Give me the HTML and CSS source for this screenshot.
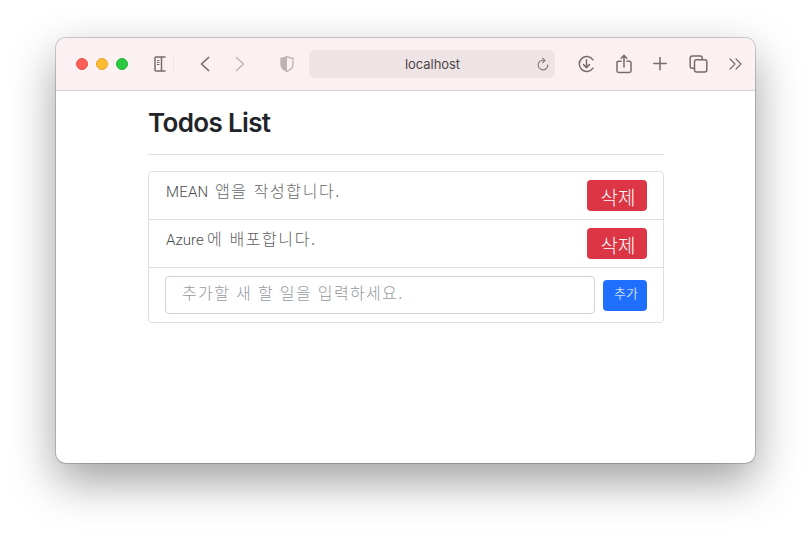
FILE: index.html
```html
<!DOCTYPE html>
<html lang="ko">
<head>
<meta charset="utf-8">
<title>Todos List</title>
<link rel="stylesheet" href="styles.css">
</head>
<body>
<div class="window">
  <header class="toolbar">
    <div class="lights"><span class="light red"></span><span class="light yellow"></span><span class="light green"></span></div>
    <svg class="icon sidebar" width="12" height="16" viewBox="0 0 12 16"><path d="M11.500 1H2Q1 1 1 2V14Q1 15 2 15H11.500M7.500 1V15"/><path class="fine" d="M3 4.500H5.500M3 6.500H5.500M3 8.500H5.500"/></svg>
    <span class="divider"></span>
    <svg class="icon back" width="10" height="16" viewBox="0 0 10 16"><path d="M8.500 1.500L1.500 8L8.500 14.500"/></svg>
    <svg class="icon forward" width="10" height="16" viewBox="0 0 10 16"><path d="M1.500 1.500L8.500 8L1.500 14.500"/></svg>
    <svg class="shield" width="14" height="18" viewBox="0 0 14 18"><path class="line" d="M7 1.600Q9.500 3 13 3.300V9.500C13 13 10 15 7 16.300C4 15 1 13 1 9.500V3.300Q4.500 3 7 1.600Z"/><path class="half" d="M7 1.600Q4.500 3 1 3.300V9.500C1 13 4 15 7 16.300Z"/></svg>
    <div class="address"><span class="host">localhost</span>
      <svg class="reload" width="12" height="15" viewBox="0 0 12 15"><path d="M10.700 7.500A4.800 4.800 0 1 1 6 3.300H7.700M5.300 .8L8 3.400L5.300 6"/></svg>
    </div>
    <svg class="icon download" width="17" height="18" viewBox="0 0 17 18"><path d="M15 4.800A7.500 7.500 0 1 0 15 13.200M8.500 4.800V12.500M5.500 9.600L8.500 12.600L11.500 9.600"/></svg>
    <svg class="icon share" width="16" height="20" viewBox="0 0 16 20"><path d="M5 7.200H2.700Q1 7.200 1 8.900V16.700Q1 18.400 2.700 18.400H13.300Q15 18.400 15 16.700V8.900Q15 7.200 13.300 7.200H11M8 13V1.500M5.200 4.200L8 1.400L10.800 4.200"/></svg>
    <svg class="icon plus" width="14" height="14" viewBox="0 0 14 14"><path d="M.8 6.500H13.200M7 .3V12.700"/></svg>
    <svg class="icon tabs" width="19" height="18" viewBox="0 0 19 18"><rect x="5.500" y="4.700" width="12.300" height="12.300" rx="2"/><path d="M5.500 13.200H3.200Q1.200 13.200 1.200 11.200V3Q1.200 1 3.200 1H11.200Q13.200 1 13.200 3V4.700"/></svg>
    <svg class="icon more" width="13" height="12" viewBox="0 0 13 12"><path d="M1 1L6 6L1 11M7 1L12 6L7 11"/></svg>
  </header>
  <main class="page">
    <h1>Todos List</h1>
    <ul class="list">
      <li class="item"><span class="label"><span class="latin mean">MEAN</span><span class="ko first">앱을 작성합니다.</span></span><button class="btn delete">삭제</button></li>
      <li class="item"><span class="label"><span class="latin azure">Azure</span><span class="ko second">에 배포합니다.</span></span><button class="btn delete">삭제</button></li>
      <li class="item entry"><div class="field"><span class="ko hint">추가할 새 할 일을 입력하세요.</span></div><button class="btn add">추가</button></li>
    </ul>
  </main>
</div>
</body>
</html>
```

FILE: styles.css
```css
* { box-sizing: border-box; }
body { margin: 0; height: 537px; padding: 38px 56px; background: #fff; overflow: hidden; font-family: Inter, "Noto Sans CJK KR", sans-serif; }
.window { width: 699px; height: 425px; background: #fff; border-radius: 10px; overflow: hidden; box-shadow: 0 0 0 1px rgba(0,0,0,.18), 0 18px 46px rgba(0,0,0,.38); }
.toolbar { height: 53px; display: flex; align-items: center; background: #fcf1f2; border-bottom: 1px solid #d8d2d4; padding-left: 20px; }
.toolbar > * { flex: none; }
.lights { display: flex; gap: 8px; width: 78px; }
.light { width: 12px; height: 12px; border-radius: 50%; border: 1px solid; }
.red { background: #fe5f57; border-color: #e8524a; }
.yellow { background: #febc2e; border-color: #e5a52e; }
.green { background: #28c840; border-color: #24b839; }
.icon { fill: none; stroke: #766b6d; stroke-width: 1.5; stroke-linecap: round; stroke-linejoin: round; }
.sidebar { stroke-linecap: butt; }
.fine { stroke-width: 1; }
.divider { width: 1px; height: 12px; background: #eee3e4; margin-left: 7px; }
.back { margin-left: 26px; stroke-width: 1.7; }
.forward { margin-left: 25px; stroke: #bfb5b7; stroke-width: 1.6; }
.shield { margin-left: 35px; fill: none; }
.line { stroke: #bdb2b4; stroke-width: 1.3; }
.half { fill: #bdb2b4; }
.address { margin-left: 15px; width: 246px; height: 28px; border-radius: 6px; background: #eee4e5; display: grid; grid-template-columns: 1fr 18px; align-items: center; padding-left: 18px; }
.host { font-size: 13px; color: #4c4648; text-align: center; padding-left: 1px; letter-spacing: -.05px; }
.reload { fill: none; stroke: #85797c; stroke-width: 1.1; }
.download { margin-left: 22.5px; }
.share { margin-left: 21px; }
.plus { margin-left: 21.5px; }
.tabs { margin-left: 22px; }
.more { margin-left: 21px; stroke-width: 1.2; }
.page { width: 516px; margin-left: 92px; }
h1 { margin: 0 0 16px; height: 64px; border-bottom: 1px solid #dedfe0; padding: 16px 0 0; font-size: 26px; line-height: 32px; font-weight: 600; color: #212529; letter-spacing: -.65px; }
.list { list-style: none; margin: 0; padding: 0; border: 1px solid #dedfe0; border-radius: 4px; }
.item { height: 48px; display: flex; justify-content: space-between; padding: 8px 16px 0 17px; border-bottom: 1px solid #dedfe0; }
.entry { height: 54px; padding-left: 16px; border: 0; }
.label { display: flex; align-items: baseline; height: 20px; line-height: 20px; white-space: nowrap; color: #4a4a4c; }
.latin { font: 300 15px/20px Roboto, sans-serif; }
.mean { width: 49px; letter-spacing: .2px; }
.azure { width: 41px; }
.ko { font-family: "Noto Sans CJK KR", sans-serif; font-weight: 300; font-size: 16px; letter-spacing: 1.6px; white-space: nowrap; }
.first { color: #68686a; }
.second { color: #606062; }
.hint { letter-spacing: 1.35px; color: #95999f; }
.btn { border: 0; border-radius: 4px; height: 31px; color: #fff; font-family: "Noto Sans CJK KR", sans-serif; font-weight: 300; padding: 0; }
.delete { width: 60px; background: #dc3545; font-size: 19px; line-height: 29px; padding: 2px 0 0 2px; }
.add { width: 44px; background: #1f6fff; font-size: 13px; line-height: 26px; margin-top: 4px; padding: 0 0 5px 2px; }
.field { width: 430px; height: 38px; border: 1px solid #ced4da; border-radius: 4px; padding-left: 16px; line-height: 30px; }
```
